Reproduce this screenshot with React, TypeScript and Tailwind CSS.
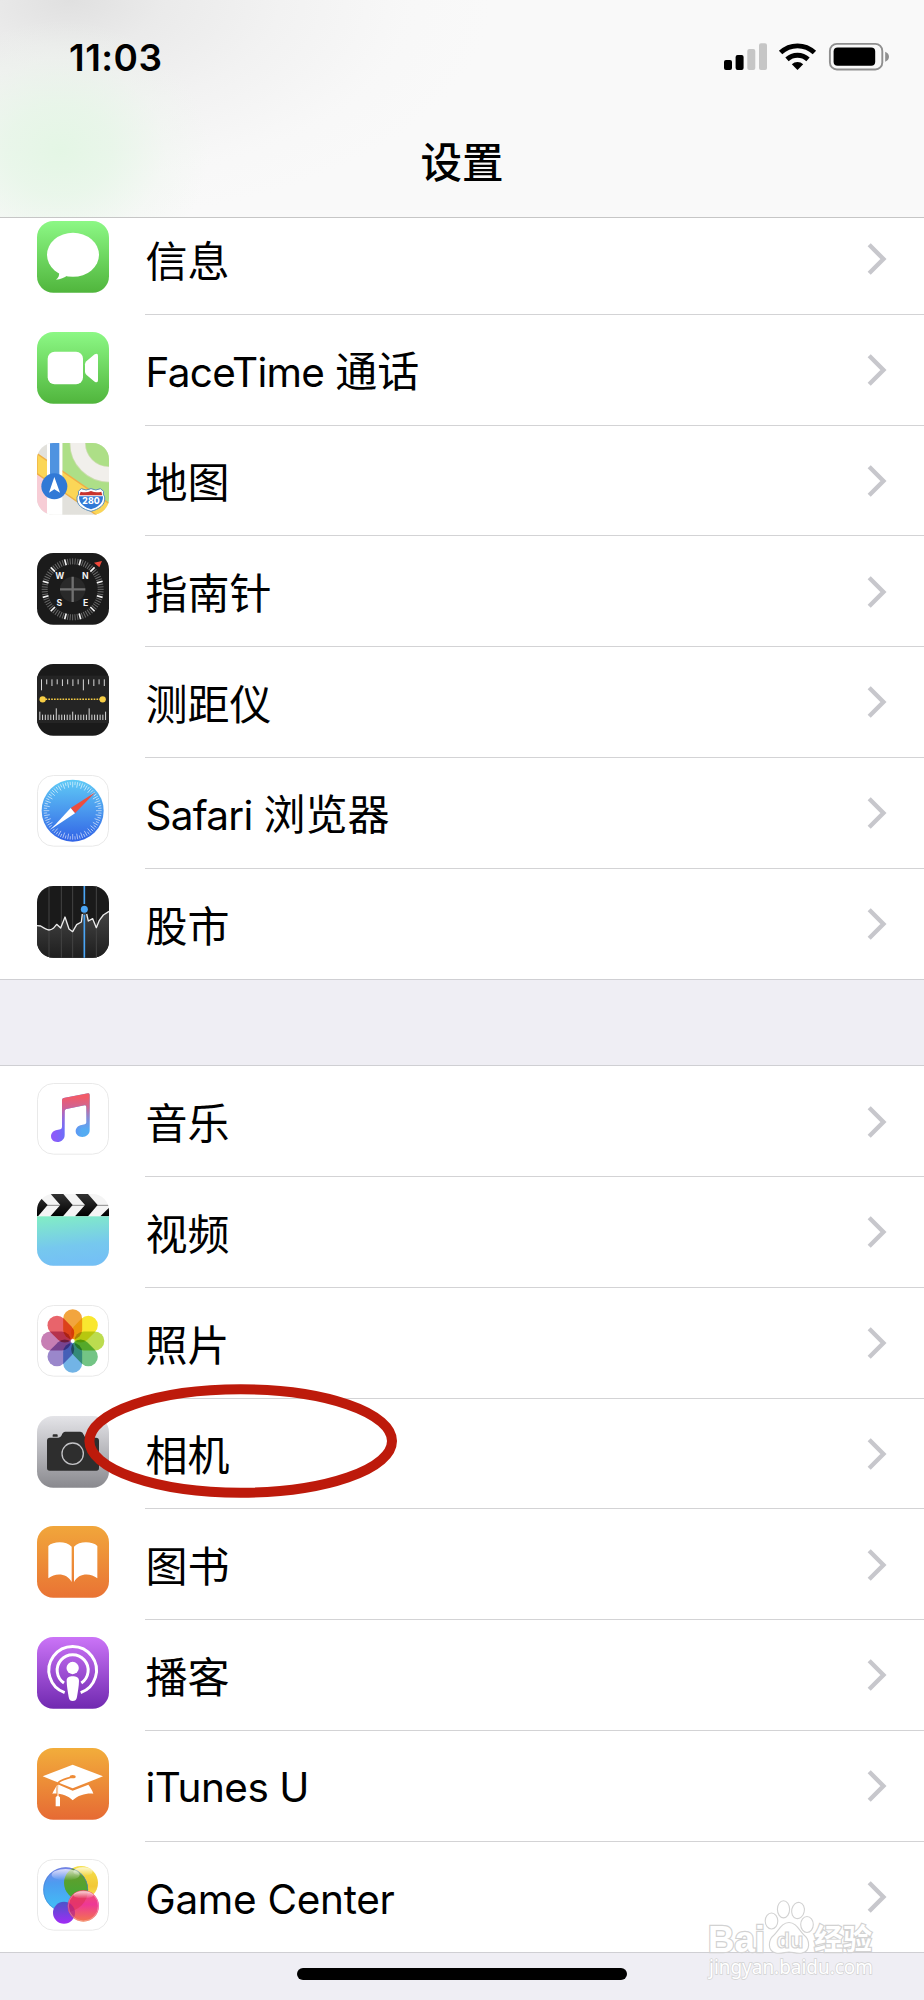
import type { ReactNode } from "react";

const range = (n: number) => Array.from({ length: n }, (_, i) => i);

function Tile({ id, from, to, outlined, children }: { id: string; from: string; to: string; outlined?: boolean; children?: ReactNode }) {
  return (
    <svg viewBox="0 0 216 216" className="block size-[72px] shrink-0">
      <defs>
        <linearGradient id={`${id}-bg`} x1="0" y1="0" x2="0" y2="1">
          <stop offset="0" stopColor={from} />
          <stop offset="1" stopColor={to} />
        </linearGradient>
        <clipPath id={`${id}-clip`}>
          <rect x="0" y="0" width="216" height="215" rx="49" />
        </clipPath>
      </defs>
      <g clipPath={`url(#${id}-clip)`}>
        <rect width="216" height="216" fill={`url(#${id}-bg)`} />
        {children}
      </g>
      {outlined && <rect x="1.5" y="1.5" width="213" height="212" rx="48" fill="none" stroke="#e9e9e9" strokeWidth="3" />}
    </svg>
  );
}

const Messages = () => (
  <Tile id="msg" from="#8cf885" to="#50b53c">
    <ellipse cx="108" cy="101.5" rx="78" ry="66" fill="#fff" />
    <path d="M66 150 C68 163 65 170 57 176 C70 176 82 170 92 163 Z" fill="#fff" />
  </Tile>
);

const FaceTime = () => (
  <Tile id="ft" from="#8cf885" to="#50b53c">
    <rect x="32" y="59" width="106" height="98" rx="21" fill="#fff" />
    <path d="M144 97 Q144 92 148 88 L173 67 Q183 61 183 72 V144 Q183 155 173 149 L148 128 Q144 124 144 119 Z" fill="#fff" />
  </Tile>
);

const Maps = () => (
  <Tile id="map" from="#e2e1dc" to="#e2e1dc">
    <path d="M0 88 L30 110 V216 H0 Z" fill="#f7cdd6" />
    <path d="M76 0 H216 V182 L76 84 Z" fill="#addf87" />
    <circle cx="216" cy="0" r="94" fill="none" stroke="#cbdcae" strokeWidth="49" />
    <circle cx="216" cy="0" r="94" fill="none" stroke="#f1efeb" strokeWidth="44" />
    <path d="M0 32 L216 181 V216 H178 L0 92 Z" fill="#fbd657" stroke="#efaf45" strokeWidth="4" />
    <path d="M30 0 H76 V216 H30 Z" fill="#fff" />
    <path d="M39 0 H67 V120 H39 Z" fill="#4f93e0" />
    <circle cx="52" cy="130" r="39" fill="#3179d6" />
    <path d="M52 102 L69 149 L52 139 L36 149 Z" fill="#fff" />
    <path d="M124 145 L133 137 Q147 145 162 137 Q177 145 190 137 L200 145 Q196 153 203 162 C206 188 184 199 162 205 C139 199 117 188 120 162 Q128 153 124 145 Z" fill="#fff" stroke="#5a8fbd" strokeWidth="3" />
    <path d="M131 146 Q147 151 162 144 Q177 151 193 146 L196 157 H127 Z" fill="#c8332d" />
    <path d="M126 160 H198 C199 184 179 194 162 199 C145 194 125 184 126 160 Z" fill="#3179d6" />
    <text x="162" y="183" textAnchor="middle" fontSize="26" className="font-['Inter'] font-extrabold" fill="#fff">280</text>
  </Tile>
);

const Compass = () => (
  <Tile id="cmp" from="#1b1b1b" to="#1b1b1b">
    {range(72).map((i) => (
      <path key={i} d="M107 16 V34" stroke={i % 6 === 3 ? "#f4f4f4" : "#6a6a6a"} strokeWidth={i % 6 === 3 ? 5 : 3} transform={`rotate(${i * 5} 107 109)`} />
    ))}
    <circle cx="107" cy="109" r="38" fill="#292929" />
    <path d="M69 109 H145 M107 71 V147" stroke="#707070" strokeWidth="7" />
    <g className="font-['Inter'] font-bold" fontSize="26" fill="#f2f2f2" textAnchor="middle">
      <text x="68" y="77">W</text>
      <text x="145" y="77">N</text>
      <text x="67" y="158">S</text>
      <text x="146" y="158">E</text>
    </g>
    <path d="M195 24 L171 29 L187 43 Z" fill="#f2483a" />
  </Tile>
);

const Measure = () => (
  <Tile id="mea" from="#1a1a1a" to="#1a1a1a">
    <rect y="35" width="216" height="142" fill="#242424" />
    {range(13).map((i) => (
      <path key={i} d={`M${13.5 + i * 15.7} 46 V${i % 8 === 0 ? 79 : i % 2 ? 61 : 66}`} stroke="#d8d8d8" strokeWidth="3" />
    ))}
    {range(25).map((i) => (
      <path key={i} d={`M${8.5 + i * 8.22} 168 V${i === 6 || i === 18 ? 133 : i % 12 === 0 ? 143 : 152}`} stroke="#d8d8d8" strokeWidth="3" />
    ))}
    <path d="M17 106 H197" stroke="#f7ce45" strokeWidth="4.5" strokeDasharray="5 3.5" />
    <circle cx="17" cy="106" r="9.5" fill="#f7ce45" />
    <circle cx="197" cy="106" r="9.5" fill="#f7ce45" />
  </Tile>
);

const Safari = () => (
  <Tile id="saf" from="#fff" to="#fff" outlined>
    <defs>
      <linearGradient id="saf-dial" x1="0" y1="0" x2="0" y2="1">
        <stop offset="0" stopColor="#5fcaf6" />
        <stop offset="0.5" stopColor="#4a98ee" />
        <stop offset="1" stopColor="#3163e6" />
      </linearGradient>
    </defs>
    <circle cx="107" cy="107" r="93" fill="url(#saf-dial)" />
    {range(72).map((i) => (
      <path key={i} d={`M107 20 V${i % 2 ? 30 : 37}`} stroke="#fff" strokeOpacity="0.75" strokeWidth="2.2" transform={`rotate(${i * 5} 107 107)`} />
    ))}
    <path d="M175 52 L101 99 L114 115 Z" fill="#ec4d3d" />
    <path d="M43 162 L101 99 L114 115 Z" fill="#fff" />
  </Tile>
);

const Stocks = () => (
  <Tile id="stk" from="#1a1a1a" to="#1a1a1a">
    <defs>
      <linearGradient id="stk-area" x1="0" y1="0" x2="0" y2="1">
        <stop offset="0" stopColor="#454545" />
        <stop offset="1" stopColor="#1e1e1e" />
      </linearGradient>
    </defs>
    <path d="M0 119 L11 120 L36 133 L49 127 L59 115 L71 126 L84 93 L96 129 L107 137 L119 116 L133 108 L136 86 L142 70 L149 86 L154 105 L167 98 L178 125 L187 103 L199 87 L216 76 V216 H0 Z" fill="url(#stk-area)" />
    <path d="M36 0 V216 M73 0 V216 M107 0 V216 M178 0 V216" stroke="#444" strokeWidth="3" />
    <path d="M0 119 L11 120 Q28 131 36 132 Q43 132 49 127 L59 115 L71 126 L84 93 L96 129 L107 137 L119 116 L133 108 L136 84 M149 84 L154 105 L167 98 L178 125 L187 103 L199 87 L216 76" fill="none" stroke="#ececec" strokeWidth="4" strokeLinejoin="round" />
    <path d="M142 0 V54 M142 86 V216" stroke="#4aa5f5" strokeWidth="5" />
    <circle cx="142" cy="70" r="10.5" fill="#4aa5f5" />
  </Tile>
);

const noteShape =
  "M75 52 Q75 46 80 45 L153 31 Q158 30 158 36 V142 C158 154 148 162 136 162 C124 162 116 154 116 145 C116 134 124 128 134 126 L144 124 Q148 123 148 118 V72 Q148 66 143 67 L88 78 Q83 79 83 84 V156 C83 169 73 177 61 177 C49 177 42 169 42 160 C42 149 50 143 60 141 L70 139 Q75 138 75 132 Z";

const Music = () => (
  <Tile id="mus" from="#fff" to="#fff" outlined>
    <defs>
      <linearGradient id="mus-base" x1="0" y1="0" x2="1" y2="0">
        <stop offset="0.1" stopColor="#8b5bfa" />
        <stop offset="0.35" stopColor="#6c6ff8" />
        <stop offset="0.8" stopColor="#55acf2" />
      </linearGradient>
      <linearGradient id="mus-top" x1="0" y1="0" x2="0" y2="1">
        <stop offset="0.08" stopColor="#f25b69" />
        <stop offset="0.3" stopColor="#d9608b" stopOpacity="0.9" />
        <stop offset="0.75" stopColor="#a56ae0" stopOpacity="0" />
      </linearGradient>
    </defs>
    <path d={noteShape} fill="url(#mus-base)" />
    <path d={noteShape} fill="url(#mus-top)" />
  </Tile>
);

const Videos = () => (
  <Tile id="vid" from="#f4f4f4" to="#f4f4f4">
    <defs>
      <linearGradient id="vid-body" x1="0" y1="0" x2="0.15" y2="1">
        <stop offset="0" stopColor="#82eec4" />
        <stop offset="0.65" stopColor="#76c8ee" />
        <stop offset="1" stopColor="#74c0f5" />
      </linearGradient>
      <linearGradient id="vid-stripe" x1="0" y1="0" x2="0" y2="1">
        <stop offset="0" stopColor="#333" />
        <stop offset="1" stopColor="#000" />
      </linearGradient>
    </defs>
    <path d="M0 34 H216" stroke="#8a8a8a" strokeWidth="3" />
    <path d="M-20 0 H-1 L32 33 L3 67 H-36 Z M41 0 H79 L107 33 L78 67 H40 L70 33 Z M115 0 H153 L182 33 L153 67 H114 L144 33 Z M190 67 L216 41 V67 Z" fill="url(#vid-stripe)" />
    <rect y="67" width="216" height="149" fill="url(#vid-body)" />
  </Tile>
);

const petals = ["#f2a53e", "#f9e72f", "#bcdc4f", "#73c485", "#72b4e6", "#9a87cb", "#c77fb4", "#e8646b"];

const Photos = () => (
  <Tile id="pho" from="#fff" to="#fff" outlined>
    {petals.map((c, i) => (
      <rect key={c} x="78.5" y="13" width="57" height="90" rx="28.5" fill={c} transform={`rotate(${i * 45} 107 108)`} className="mix-blend-multiply" />
    ))}
    <circle cx="107" cy="108" r="5" fill="#fff" />
  </Tile>
);

const Camera = () => (
  <Tile id="cam" from="#e4e4e8" to="#89898e">
    <path d="M30 74 Q30 65 39 65 H64 Q71 65 74 58 Q77 47 85 47 H130 Q137 47 140 56 Q143 65 150 65 H177 Q186 65 186 74 V156 Q186 164 178 164 H38 Q30 164 30 156 Z M47 62 V57 Q47 55 50 55 H59 Q62 55 62 57 V62 Z" fill="#2e2e2e" />
    <circle cx="107" cy="113" r="32" fill="#2e2e2e" stroke="#c3c3c6" strokeWidth="4" />
  </Tile>
);

const Books = () => (
  <Tile id="bok" from="#f1a63b" to="#e97334">
    <path d="M34 60 C48 46 88 44 104 62 V168 C91 142 56 139 34 157 Z M181 60 C167 46 127 44 111 62 V168 C124 142 159 139 181 157 Z" fill="#fff" />
  </Tile>
);

const Podcasts = () => (
  <Tile id="pod" from="#cb74f7" to="#7029b0">
    <g fill="none" stroke="#fff" strokeWidth="9">
      <path d="M83 167 A71.5 71.5 0 1 1 131 167" />
      <path d="M81 138 A46.5 46.5 0 1 1 133 138" />
    </g>
    <circle cx="107" cy="93" r="18.5" fill="#fff" />
    <path d="M89 131 C89 121 97 118 107 118 C117 118 126 121 126 131 C126 147 122 167 120 180 C118 189 114 192 107 192 C100 192 97 189 95 180 C93 167 89 147 89 131 Z" fill="#fff" />
  </Tile>
);

const ITunesU = () => (
  <Tile id="itu" from="#f2ad3b" to="#e66a34">
    <path d="M17 85 L107 50 L198 85 L107 121 Z" fill="#fff" />
    <path d="M62 109 L107 128 L154 110 C160 118 166 127 169 137 C148 135 124 141 107 157 C92 142 70 135 46 137 C50 128 56 118 62 109 Z" fill="#fff" />
    <path d="M107 86 C88 93 72 94 64 104 Q60 112 61 138" fill="none" stroke="#ee8b36" strokeWidth="5" />
    <ellipse cx="107" cy="86" rx="9" ry="5" fill="#ee8b36" />
    <path d="M63 111 V145" stroke="#fff" strokeWidth="3" />
    <path d="M56 148 Q62 139 69 148 V175 H56 Z" fill="#fff" />
  </Tile>
);

const GameCenter = () => (
  <Tile id="gc" from="#fff" to="#fff" outlined>
    <defs>
      <linearGradient id="gc-blue" x1="0" y1="0" x2="0" y2="1">
        <stop offset="0" stopColor="#7d83ec" />
        <stop offset="0.35" stopColor="#4d9cf0" />
        <stop offset="1" stopColor="#41c3f7" />
      </linearGradient>
      <linearGradient id="gc-yellow" x1="0" y1="0" x2="0" y2="1">
        <stop offset="0" stopColor="#f5e14c" />
        <stop offset="0.6" stopColor="#f2c836" />
        <stop offset="1" stopColor="#f7e463" />
      </linearGradient>
      <linearGradient id="gc-green" x1="0" y1="0" x2="0" y2="1">
        <stop offset="0" stopColor="#6d9a28" />
        <stop offset="1" stopColor="#3fa936" />
      </linearGradient>
      <linearGradient id="gc-pink" x1="0" y1="0" x2="0" y2="1">
        <stop offset="0" stopColor="#f0526a" />
        <stop offset="0.45" stopColor="#ee3796" />
        <stop offset="1" stopColor="#f3764d" />
      </linearGradient>
      <linearGradient id="gc-purple" x1="0" y1="0" x2="0" y2="1">
        <stop offset="0" stopColor="#4a55c8" />
        <stop offset="1" stopColor="#a12bf5" />
      </linearGradient>
      <linearGradient id="gc-shine" x1="0" y1="0" x2="0" y2="1">
        <stop offset="0" stopColor="#fff" stopOpacity="0.75" />
        <stop offset="1" stopColor="#fff" stopOpacity="0" />
      </linearGradient>
      <clipPath id="gc-overlap">
        <circle cx="86" cy="92" r="67" />
      </clipPath>
      <clipPath id="gc-overlap-pink">
        <circle cx="139" cy="141" r="46.5" />
      </clipPath>
    </defs>
    <circle cx="132" cy="72" r="51" fill="url(#gc-yellow)" />
    <circle cx="86" cy="92" r="67.5" fill="url(#gc-blue)" />
    <g clipPath="url(#gc-overlap)">
      <circle cx="132" cy="72" r="51" fill="url(#gc-green)" />
    </g>
    <circle cx="86" cy="92" r="66" fill="none" stroke="#4b74c8" strokeOpacity="0.5" strokeWidth="2.5" />
    <ellipse cx="86" cy="47" rx="42" ry="17" fill="url(#gc-shine)" />
    <ellipse cx="138" cy="38" rx="29" ry="13" fill="url(#gc-shine)" />
    <circle cx="81" cy="161" r="33" fill="url(#gc-purple)" />
    <circle cx="139" cy="141" r="47" fill="url(#gc-pink)" />
    <g clipPath="url(#gc-overlap-pink)">
      <circle cx="86" cy="92" r="67" fill="#dc2f45" fillOpacity="0.5" />
      <circle cx="81" cy="161" r="33" fill="#a01c8c" fillOpacity="0.55" />
    </g>
    <ellipse cx="139" cy="108" rx="30" ry="11" fill="url(#gc-shine)" />
    <circle cx="139" cy="141" r="45" fill="none" stroke="#fff" strokeOpacity="0.35" strokeWidth="2.5" />
  </Tile>
);

type Item = { icon: () => ReactNode; latin?: string; label?: string; tracking?: string };

const apps: Item[] = [
  { icon: Messages, label: "信息" },
  { icon: FaceTime, latin: "FaceTime", label: "通话", tracking: "tracking-[-0.7px]" },
  { icon: Maps, label: "地图" },
  { icon: Compass, label: "指南针" },
  { icon: Measure, label: "测距仪" },
  { icon: Safari, latin: "Safari", label: "浏览器", tracking: "tracking-[-0.75px]" },
  { icon: Stocks, label: "股市" },
];

const media: Item[] = [
  { icon: Music, label: "音乐" },
  { icon: Videos, label: "视频" },
  { icon: Photos, label: "照片" },
  { icon: Camera, label: "相机" },
  { icon: Books, label: "图书" },
  { icon: Podcasts, label: "播客" },
  { icon: ITunesU, latin: "iTunes U", tracking: "tracking-[-0.5px]" },
  { icon: GameCenter, latin: "Game Center", tracking: "tracking-[-0.3px]" },
];

function Row({ item, last }: { item: Item; last: boolean }) {
  const Icon = item.icon;
  return (
    <li className="flex h-[110.75px] pl-[37px]">
      <div className="pt-[17px]">
        <Icon />
      </div>
      <div className={`ml-9 flex flex-1 items-center justify-between pr-[37px] ${last ? "" : "border-b border-[#d3d3d5]"}`}>
        <span className="flex items-baseline gap-[11px] pl-[0.5px] pt-[6px] text-[42px] leading-none text-black">
          {item.latin && <span className={`text-[40.5px] ${item.tracking ?? ""}`}>{item.latin}</span>}
          {item.label && <span>{item.label}</span>}
        </span>
        <svg viewBox="0 0 20 32" className="mt-px h-8 w-5" fill="none" stroke="#c7c7cc" strokeWidth="4.4">
          <path d="M2.2 1.8 L16.4 16 L2.2 30.2" />
        </svg>
      </div>
    </li>
  );
}

function Group({ items }: { items: Item[] }) {
  return (
    <ul className="border-b border-[#cfcfd3] bg-white">
      {items.map((item, i) => (
        <Row key={i} item={item} last={i === items.length - 1} />
      ))}
    </ul>
  );
}

function StatusIcons() {
  return (
    <svg viewBox="724 40 166 34" className="h-[34px] w-[166px]">
      <rect x="724" y="60" width="8" height="10" rx="2" />
      <rect x="735.6" y="55" width="8" height="15" rx="2" />
      <rect x="747.3" y="49" width="8" height="21" rx="2" fill="#c6c6c6" />
      <rect x="759" y="43.3" width="8" height="26.7" rx="2" fill="#c6c6c6" />
      <g fill="none" stroke="#000" strokeWidth="4.9">
        <path d="M780.6 52.6 A24.5 24.5 0 0 1 814.4 52.6" />
        <path d="M787 59.4 A15.4 15.4 0 0 1 808 59.4" />
      </g>
      <path d="M797.5 70 L791.8 64.3 A8.4 8.4 0 0 1 803.2 64.3 Z" />
      <rect x="829.9" y="43.9" width="52.4" height="25.6" rx="7" fill="none" stroke="#8f8f8f" strokeWidth="1.9" />
      <rect x="833.6" y="47.5" width="41.6" height="18.3" rx="4" />
      <path d="M885.2 51.8 Q889 53.5 889 56.7 Q889 60 885.2 61.8 Z" fill="#8f8f8f" />
    </svg>
  );
}

function Watermark() {
  return (
    <svg viewBox="0 0 172 84" className="absolute left-[705px] top-[1897px] h-[84px] w-[172px]" fill="#fff" stroke="#d2d2d2" strokeWidth="1.4">
      <g className="font-['Liberation_Sans','Noto_Sans_CJK_SC',sans-serif] font-bold [paint-order:stroke]" strokeWidth="2.4">
        <text x="3" y="54.5" fontSize="37" textLength="57" lengthAdjust="spacingAndGlyphs">Bai</text>
        <text x="109" y="52.5" fontSize="29" textLength="58" lengthAdjust="spacingAndGlyphs">经验</text>
      </g>
      <g strokeWidth="1.1">
        <ellipse cx="66.5" cy="24" rx="6.3" ry="8" />
        <ellipse cx="78.5" cy="12.3" rx="6.1" ry="8.6" />
        <ellipse cx="93" cy="13.5" rx="6.3" ry="8.2" transform="rotate(12 93 13.5)" />
        <ellipse cx="102" cy="27.5" rx="6.3" ry="8" />
        <path d="M84 25.5 C91 25.5 94 33 99 38 C105 43 106 54 97 56 C92 57 88 55 84 55 C80 55 76 57 71 56 C62 54 63 43 69 38 C74 33 77 25.5 84 25.5 Z" />
        <text x="71.5" y="51" fontSize="22" textLength="27" lengthAdjust="spacingAndGlyphs" className="font-['Liberation_Sans',sans-serif] font-bold">du</text>
      </g>
      <text x="4" y="76.5" fontSize="19.5" textLength="164" lengthAdjust="spacingAndGlyphs" className="font-['Noto_Sans',sans-serif] [paint-order:stroke]">jingyan.baidu.com</text>
    </svg>
  );
}

export default function App() {
  return (
    <div className="relative flex h-[2000px] w-[924px] flex-col overflow-hidden bg-[#efeef4] font-['Inter','Noto_Sans_CJK_SC',sans-serif]">
      <header className="relative z-10 -mb-[14px] flex h-[218px] shrink-0 flex-col border-b border-[#c6c6c6] bg-[#f9f9f9] bg-[radial-gradient(ellipse_150px_130px_at_60px_150px,#e4f6e5_0%,#e6f6e7cc_35%,#eef6ee66_70%,#f8f8f800_100%),radial-gradient(ellipse_420px_220px_at_70px_0px,#e0e0e0_0%,#e9e9e9e6_22%,#efefefb3_50%,#f5f5f54d_80%,#f8f8f800_100%)]">
        <div className="flex h-[114px] items-center justify-between pl-[69px] pr-[34px]">
          <time className="text-[37px] font-semibold leading-none tracking-[0.5px] text-black">11:03</time>
          <StatusIcons />
        </div>
        <h1 className="pt-[29px] text-center text-[41.5px] font-medium leading-none text-black">设置</h1>
      </header>
      <Group items={apps} />
      <div className="h-[86px] shrink-0 border-b border-[#cfcfd3]" />
      <Group items={media} />
      <div className="mt-[15px] h-3 w-[330px] self-center rounded-full bg-black" />
      <svg viewBox="0 0 316 116" className="absolute left-[83px] top-[1383px] h-[116px] w-[316px]" fill="none">
        <ellipse cx="157.7" cy="58" rx="151.3" ry="51.7" stroke="#bd1a0b" strokeWidth="10" />
      </svg>
      <Watermark />
    </div>
  );
}
